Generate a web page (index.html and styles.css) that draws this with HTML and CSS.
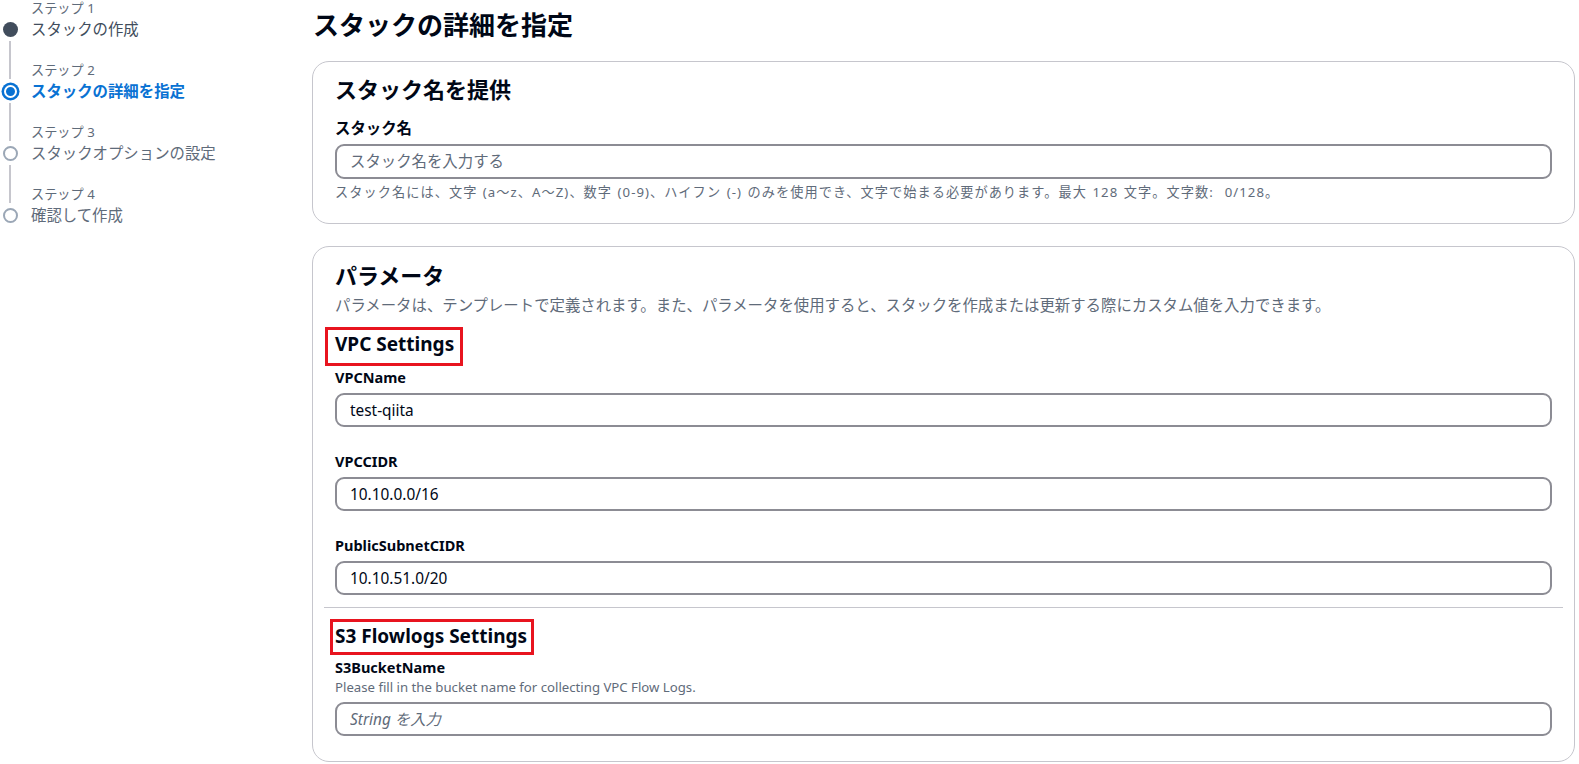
FILE: index.html
```html
<!DOCTYPE html>
<html lang="ja">
<head>
<meta charset="utf-8">
<title>スタックの詳細を指定</title>
<link rel="stylesheet" href="styles.css">
</head>
<body>
<div class="layout">
  <nav class="steps">
    <ol class="step-list">
      <li class="step done">
        <div class="rail"><span class="seg seg-top hidden"></span><span class="mark"><span class="dot"></span></span><span class="seg seg-bottom"></span></div>
        <div class="step-text"><div class="step-num">ステップ 1</div><div class="step-title">スタックの作成</div></div>
      </li>
      <li class="step active">
        <div class="rail"><span class="seg seg-top"></span><span class="mark"><span class="dot"></span></span><span class="seg seg-bottom"></span></div>
        <div class="step-text"><div class="step-num">ステップ 2</div><div class="step-title">スタックの詳細を指定</div></div>
      </li>
      <li class="step">
        <div class="rail"><span class="seg seg-top"></span><span class="mark"><span class="dot"></span></span><span class="seg seg-bottom"></span></div>
        <div class="step-text"><div class="step-num">ステップ 3</div><div class="step-title">スタックオプションの設定</div></div>
      </li>
      <li class="step">
        <div class="rail"><span class="seg seg-top"></span><span class="mark"><span class="dot"></span></span><span class="seg seg-bottom hidden"></span></div>
        <div class="step-text"><div class="step-num">ステップ 4</div><div class="step-title">確認して作成</div></div>
      </li>
    </ol>
  </nav>

  <main class="main">
    <h1 class="page-title">スタックの詳細を指定</h1>

    <section class="card card-name">
      <h2 class="card-title">スタック名を提供</h2>
      <label class="field-label">スタック名</label>
      <input class="text-input" type="text" placeholder="スタック名を入力する">
      <p class="hint">スタック名には、文字 (a<span class="fw">～</span>z、A<span class="fw">～</span>Z)、数字 (0-9)、ハイフン (-) のみを使用でき、文字で始まる必要があります。最大 128 文字。文字数:&nbsp; 0/128。</p>
    </section>

    <section class="card card-params">
      <h2 class="card-title">パラメータ</h2>
      <p class="card-desc">パラメータは、テンプレートで定義されます。また、パラメータを使用すると、スタックを作成または更新する際にカスタム値を入力できます。</p>

      <h3 class="group-title group-vpc"><span class="mark-box">VPC Settings</span></h3>
      <div class="field field-first">
        <label class="field-label">VPCName</label>
        <input class="text-input" type="text" value="test-qiita">
      </div>
      <div class="field">
        <label class="field-label">VPCCIDR</label>
        <input class="text-input" type="text" value="10.10.0.0/16">
      </div>
      <div class="field">
        <label class="field-label">PublicSubnetCIDR</label>
        <input class="text-input" type="text" value="10.10.51.0/20">
      </div>

      <hr class="divider">

      <h3 class="group-title group-s3"><span class="mark-box mark-box-s3">S3 Flowlogs Settings</span></h3>
      <div class="field field-first field-s3">
        <label class="field-label">S3BucketName</label>
        <p class="field-desc">Please fill in the bucket name for collecting VPC Flow Logs.</p>
        <input class="text-input input-italic" type="text" placeholder="String を入力">
      </div>
    </section>
  </main>
</div>
</body>
</html>
```

FILE: styles.css
```css
html, body {
  margin: 0;
  padding: 0;
  background: #ffffff;
  overflow: hidden;
}

body {
  font-family: "Noto Sans", "Noto Sans CJK JP", sans-serif;
  color: #000716;
  font-size: 15.4px;
}

.layout {
  display: flex;
  align-items: flex-start;
  height: 764px;
}

/* ---------- sidebar steps ---------- */
.steps {
  width: 312px;
  flex: none;
}

.step-list {
  list-style: none;
  margin: -2px 0 0 0;
  padding: 0;
}

.step {
  display: flex;
  height: 62px;
}

.rail {
  width: 20px;
  flex: none;
  display: flex;
  flex-direction: column;
  align-items: center;
}

.seg {
  width: 2px;
  background: #c6c6cd;
}

.seg.hidden {
  background: transparent;
}

.seg-top {
  height: 19px;
}

.seg-bottom {
  flex: 1;
  margin-top: 2px;
}

.mark {
  width: 20px;
  height: 20px;
  flex: none;
  display: flex;
  align-items: center;
  justify-content: center;
  margin-top: 2px;
}

.dot {
  width: 11px;
  height: 11px;
  border-radius: 50%;
  border: 2px solid #9ba7b6;
  background: #ffffff;
}

.step.done .dot {
  width: 15px;
  height: 15px;
  border: none;
  background: #414d5c;
}

.step.active .dot {
  width: 9px;
  height: 9px;
  border: 2.5px solid #ffffff;
  background: #0972d3;
  box-shadow: 0 0 0 2.5px #0972d3;
}

.step-text {
  margin-left: 11px;
  white-space: nowrap;
}

.step-num {
  font-size: 13.2px;
  line-height: 20px;
  color: #5f6b7a;
}

.step-title {
  font-size: 15.4px;
  line-height: 24px;
  color: #5f6b7a;
}

.step.done .step-title {
  color: #414d5c;
}

.step.active .step-title {
  color: #0972d3;
  font-weight: 700;
}

/* ---------- main ---------- */
.main {
  flex: 1;
  min-width: 0;
  padding: 7px 4px 0 0;
}

.page-title {
  margin: 0 0 0 1px;
  font-size: 26px;
  line-height: 36px;
  font-weight: 700;
  color: #000716;
}

.card {
  border: 1px solid #c6c6cd;
  border-radius: 17px;
  padding: 13px 22px 23px 22px;
  background: #ffffff;
}

.card-name {
  margin-top: 18px;
}

.card-params {
  margin-top: 22px;
  padding-top: 14px;
  padding-bottom: 25px;
}

.card-title {
  margin: 0;
  font-size: 22px;
  line-height: 28px;
  font-weight: 700;
  color: #000716;
}

.field-label {
  display: block;
  font-size: 14.5px;
  line-height: 20px;
  font-weight: 700;
  color: #000716;
}

.card-name .field-label {
  font-size: 15.4px;
  margin-top: 16px;
}

.text-input {
  display: block;
  box-sizing: border-box;
  width: 100%;
  height: 34px;
  margin: 5px 0 0 0;
  padding: 0 12px 0 13px;
  border: 2px solid #8c8c94;
  border-radius: 9px;
  background: #ffffff;
  font-family: "Noto Sans", "Noto Sans CJK JP", sans-serif;
  font-size: 15.4px;
  color: #000716;
  outline: none;
}

.card-name .text-input {
  height: 35px;
}

.text-input::placeholder {
  color: #5f6b7a;
  opacity: 1;
}

.input-italic::placeholder {
  font-style: italic;
}

.hint {
  margin: 5px 0 0 0;
  font-size: 13.2px;
  line-height: 16px;
  letter-spacing: 1.05px;
  word-spacing: 1px;
  color: #5f6b7a;
  white-space: nowrap;
}

.fw {
  font-family: "Noto Sans CJK JP", sans-serif;
}

.card-desc {
  margin: 7px 0 0 0;
  font-size: 15.4px;
  line-height: 20px;
  color: #5f6b7a;
}

.group-title {
  margin: 0;
  font-size: 19px;
  line-height: 24px;
  font-weight: 700;
  color: #000716;
}

.group-vpc {
  margin-top: 11px;
}

.mark-box {
  display: inline-block;
  border: 3px solid #e8141f;
  padding: 2px 6px 7px 7px;
  margin-left: -10px;
}

.mark-box-s3 {
  padding: 2px 4px 4px 2px;
  margin-left: -5px;
}

.field {
  margin-top: 24px;
}

.field-first {
  margin-top: 1px;
}

.field-s3 {
  margin-top: 2px;
}

.field .text-input {
  margin-top: 6px;
}

.field-desc {
  margin: 2px 0 0 0;
  font-size: 13.2px;
  line-height: 16px;
  color: #5f6b7a;
}

.field-s3 .text-input {
  margin-top: 7px;
}

.divider {
  margin: 12px -11px 0 -11px;
  border: none;
  border-top: 1px solid #c6c6cd;
  height: 0;
}

.group-s3 {
  margin-top: 11px;
}
```
